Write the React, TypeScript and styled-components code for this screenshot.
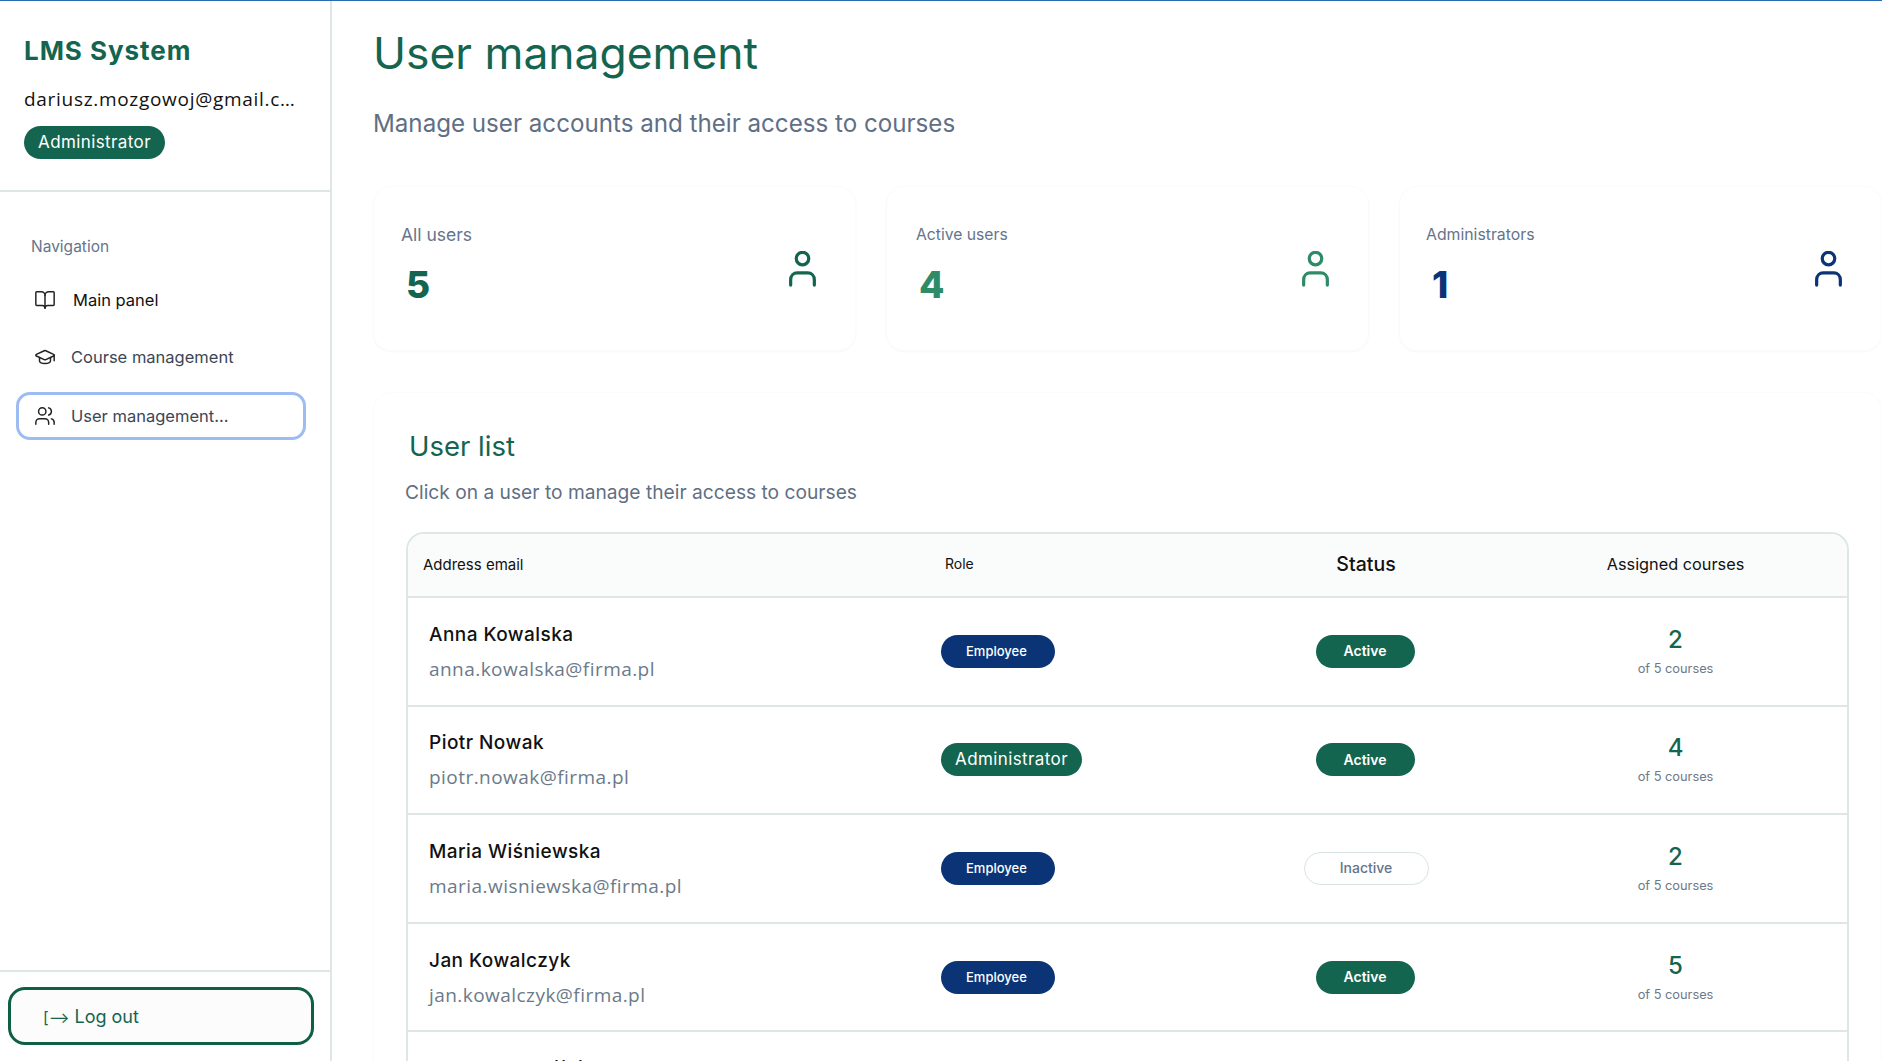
import React from "react";
import styled, { createGlobalStyle } from "styled-components";
import { BookOpen, GraduationCap, Users } from "lucide-react";

const Global = createGlobalStyle`
  html, body { margin: 0; padding: 0; height: 100%; overflow: hidden; background: #fff; }
  #root { height: 100%; }
  * { box-sizing: border-box; }
`;

const GREEN = "#14654f";
const NAVY = "#0b3477";
const GREY = "#64748b";
const LINE = "#dfe7e6";
const WIDE = `"Open Sans", "Noto Sans", sans-serif`;
const BODY = `Inter, "Noto Sans", sans-serif`;

const Shell = styled.div`
  display: flex;
  height: 1061px;
  overflow: hidden;
  border-top: 1px solid #2b6cb0;
  font-family: ${BODY};
`;
const Sidebar = styled.aside`
  width: 332px;
  flex: none;
  display: flex;
  flex-direction: column;
  border-right: 2px solid ${LINE};
`;
const Brand = styled.div`
  height: 191px;
  padding: 33px 24px 0;
  border-bottom: 2px solid ${LINE};
`;
const Logo = styled.div`
  font: 700 26px/34px ${BODY};
  letter-spacing: 0.95px;
  color: ${GREEN};
`;
const UserEmail = styled.div`
  margin-top: 18px;
  font: 400 19px/26px ${WIDE};
  letter-spacing: 0.7px;
  color: #111;
  width: 274px;
  white-space: nowrap;
  overflow: hidden;
  text-overflow: ellipsis;
`;
const RoleBadge = styled.span<{ $tone: "green" | "navy"; $small?: boolean }>`
  display: inline-flex;
  align-items: center;
  justify-content: ${(p) => (p.$small ? "flex-start" : "center")};
  height: 33px;
  border-radius: 17px;
  color: #fff;
  background: ${(p) => (p.$tone === "green" ? GREEN : NAVY)};
  font: ${(p) => (p.$small ? "500 13px" : "400 17px")}/1 ${BODY};
  letter-spacing: ${(p) => (p.$small ? "0" : "0.4px")};
  padding: ${(p) => (p.$small ? "0 0 0 25px" : "0 14px")};
  width: ${(p) => (p.$small ? "114px" : "auto")};
`;
const BrandBadge = styled(RoleBadge)`
  margin-top: 14px;
`;
const Nav = styled.nav`
  flex: 1;
  padding: 45px 24px 0 16px;
  display: flex;
  flex-direction: column;
`;
const NavTitle = styled.div`
  font: 400 15.5px/20px ${BODY};
  color: ${GREY};
  padding-left: 15px;
  margin-bottom: 20px;
`;
const NavItem = styled.div<{ $active?: boolean; $dark?: boolean; $gap: number }>`
  display: flex;
  align-items: center;
  gap: ${(p) => p.$gap}px;
  height: ${(p) => (p.$active ? "48px" : "46px")};
  margin-top: ${(p) => (p.$active ? "1px" : "0")};
  margin-bottom: 11px;
  padding-left: ${(p) => (p.$active ? "15px" : "18px")};
  font: 400 16.5px/1 ${BODY};
  color: ${(p) => (p.$dark ? "#111" : "#3b4656")};
  border-radius: 14px;
  border: ${(p) => (p.$active ? "3px solid #9dbcf2" : "0")};
  svg { flex: none; }
`;
const SideFoot = styled.div`
  height: 91px;
  border-top: 2px solid ${LINE};
  padding: 15px 16px 0 8px;
`;
const LogOut = styled.button`
  width: 100%;
  height: 58px;
  background: #fbfcfb;
  border: 3px solid #0f5f45;
  border-radius: 17px;
  color: ${GREEN};
  font: 400 18px/1 ${BODY};
  text-align: left;
  padding: 2px 0 0 32px;
`;
const LogOutArrow = styled.span`
  font-size: 15.5px;
`;
const Main = styled.main`
  flex: 1;
  min-width: 0;
  padding: 25px 0 0 41px;
`;
const Title = styled.h1`
  margin: 0;
  font: 400 44.4px/54px ${BODY};
  color: ${GREEN};
`;
const Subtitle = styled.p`
  margin: 29px 0 0;
  font: 400 24.15px/30px ${BODY};
  color: #5f6f85;
`;
const Cards = styled.div`
  display: grid;
  grid-template-columns: repeat(3, 483px);
  gap: 30px;
  margin-top: 47px;
`;
const Card = styled.div`
  height: 165px;
  border-radius: 18px;
  border: 1px solid #fbfbfb;
  box-shadow: 0 1px 2px rgba(0, 0, 0, 0.035);
  display: flex;
  justify-content: space-between;
  padding: 36px 38px 0 27px;
`;
const CardLabel = styled.div<{ $size: number; $shift: number }>`
  font: 400 ${(p) => p.$size}px/24px ${BODY};
  margin-left: ${(p) => p.$shift}px;
  color: ${GREY};
`;
const CardValue = styled.div<{ $c: string }>`
  margin-top: 15px;
  padding-left: 5px;
  font: 800 37px/46px ${BODY};
  color: ${(p) => p.$c};
`;
const CardIcon = styled.svg`
  width: 29px;
  height: 36px;
  margin-top: 28px;
`;
const Panel = styled.section`
  margin-top: 41px;
  border: 1px solid #fbfbfb;
  border-radius: 18px 18px 0 0;
  box-shadow: 0 1px 2px rgba(0, 0, 0, 0.02);
  padding: 35px 32px 0 32px;
  height: 700px;
`;
const PanelTitle = styled.h2`
  margin: 0 0 0 3px;
  font: 400 27.5px/36px ${BODY};
  color: ${GREEN};
`;
const PanelSub = styled.p`
  margin: 14px 0 0 -1px;
  font: 400 19.2px/28px ${BODY};
  color: #5f6f85;
`;
const Table = styled.div`
  margin-top: 26px;
  border: 2px solid ${LINE};
  border-bottom: 0;
  border-radius: 18px 18px 0 0;
  overflow: hidden;
`;
const Row = styled.div<{ $head?: boolean }>`
  display: grid;
  grid-template-columns: 523px 299px 272px 1fr;
  align-items: center;
  height: ${(p) => (p.$head ? "64px" : "108.6px")};
  background: ${(p) => (p.$head ? "#fafbfb" : "#fff")};
  border-bottom: 2px solid ${LINE};
  color: #111;
`;
const HeadCell = styled.div<{ $size: number; $pad?: number; $center?: boolean; $w?: number }>`
  font: ${(p) => p.$w ?? 400} ${(p) => p.$size}px/1 ${BODY};
  padding-left: ${(p) => p.$pad ?? 0}px;
  padding-bottom: ${(p) => (p.$size < 19 ? "2px" : "0")};
  text-align: ${(p) => (p.$center ? "center" : "left")};
`;
const UserCell = styled.div`
  padding-left: 21px;
`;
const UserName = styled.div`
  margin-top: 2px;
  font: 500 19px/24px ${BODY};
  letter-spacing: 0.45px;
  color: #111;
`;
const UserMail = styled.div`
  margin-top: 9px;
  font: 400 19px/26px ${WIDE};
  letter-spacing: 0.45px;
  color: #6b7a8a;
`;
const RoleCell = styled.div`
  padding-left: 10px;
`;
const StatusCell = styled.div`
  display: flex;
  justify-content: center;
`;
const Status = styled.span<{ $on: boolean }>`
  display: inline-flex;
  align-items: center;
  justify-content: center;
  height: 33px;
  width: ${(p) => (p.$on ? "99px" : "125px")};
  margin-right: ${(p) => (p.$on ? "2px" : "0")};
  border-radius: 17px;
  font: ${(p) => (p.$on ? 600 : 500)} 14px/1 ${BODY};
  color: ${(p) => (p.$on ? "#fff" : "#64748b")};
  background: ${(p) => (p.$on ? GREEN : "#fff")};
  border: ${(p) => (p.$on ? "0" : "1.5px solid #d9e2e3")};
`;
const CountCell = styled.div`
  text-align: center;
  padding-left: 2px;
`;
const Count = styled.div`
  font: 500 24px/30px ${BODY};
  color: ${GREEN};
`;
const CountSub = styled.div`
  margin-top: 5px;
  font: 400 12.8px/18px ${BODY};
  color: #6b7a8a;
`;

const PersonIcon = ({ color }: { color: string }) => (
  <CardIcon viewBox="0 0 30 38" fill="none" stroke={color} strokeWidth="3.4" strokeLinecap="round">
    <ellipse cx="15" cy="8" rx="6.6" ry="6.6" />
    <path d="M2.5 36v-5.5C2.5 26 5.5 23 9.5 23h11c4 0 7 3 7 7.5V36" />
  </CardIcon>
);

const stats = [
  { label: "All users", value: "5", color: GREEN, size: 17.5, shift: 0 },
  { label: "Active users", value: "4", color: "#2e8b68", size: 15.7, shift: 2 },
  { label: "Administrators", value: "1", color: NAVY, size: 15.8, shift: -1 },
];

const users = [
  { name: "Anna Kowalska", mail: "anna.kowalska@firma.pl", admin: false, on: true, n: 2 },
  { name: "Piotr Nowak", mail: "piotr.nowak@firma.pl", admin: true, on: true, n: 4 },
  { name: "Maria Wiśniewska", mail: "maria.wisniewska@firma.pl", admin: false, on: false, n: 2 },
  { name: "Jan Kowalczyk", mail: "jan.kowalczyk@firma.pl", admin: false, on: true, n: 5 },
  { name: "Katarzyna Wójcik", mail: "katarzyna.wojcik@firma.pl", admin: false, on: true, n: 1 },
];

export default function App() {
  return (
    <>
      <Global />
      <Shell>
        <Sidebar>
          <Brand>
            <Logo>LMS System</Logo>
            <UserEmail>dariusz.mozgowoj@gmail.com</UserEmail>
            <BrandBadge $tone="green">Administrator</BrandBadge>
          </Brand>
          <Nav>
            <NavTitle>Navigation</NavTitle>
            <NavItem $dark $gap={17}>
              <BookOpen size={22} strokeWidth={1.6} color="#222" />
              Main panel
            </NavItem>
            <NavItem $gap={15}>
              <GraduationCap size={22} strokeWidth={1.6} color="#222" />
              Course management
            </NavItem>
            <NavItem $active $gap={15}>
              <Users size={22} strokeWidth={1.6} color="#222" />
              User management...
            </NavItem>
          </Nav>
          <SideFoot>
            <LogOut><LogOutArrow>[⟶</LogOutArrow> Log out</LogOut>
          </SideFoot>
        </Sidebar>
        <Main>
          <Title>User management</Title>
          <Subtitle>Manage user accounts and their access to courses</Subtitle>
          <Cards>
            {stats.map((s) => (
              <Card key={s.label}>
                <div>
                  <CardLabel $size={s.size} $shift={s.shift}>{s.label}</CardLabel>
                  <CardValue $c={s.color}>{s.value}</CardValue>
                </div>
                <PersonIcon color={s.color} />
              </Card>
            ))}
          </Cards>
          <Panel>
            <PanelTitle>User list</PanelTitle>
            <PanelSub>Click on a user to manage their access to courses</PanelSub>
            <Table>
              <Row $head>
                <HeadCell $size={15} $pad={15}>Address email</HeadCell>
                <HeadCell $size={14} $pad={14}>Role</HeadCell>
                <HeadCell $size={19.5} $center $w={500}>Status</HeadCell>
                <HeadCell $size={16.3} $center $pad={2}>Assigned courses</HeadCell>
              </Row>
              {users.map((u) => (
                <Row key={u.mail}>
                  <UserCell>
                    <UserName>{u.name}</UserName>
                    <UserMail>{u.mail}</UserMail>
                  </UserCell>
                  <RoleCell>
                    {u.admin ? (
                      <RoleBadge $tone="green">Administrator</RoleBadge>
                    ) : (
                      <RoleBadge $tone="navy" $small>Employee</RoleBadge>
                    )}
                  </RoleCell>
                  <StatusCell>
                    <Status $on={u.on}>{u.on ? "Active" : "Inactive"}</Status>
                  </StatusCell>
                  <CountCell>
                    <Count>{u.n}</Count>
                    <CountSub>of 5 courses</CountSub>
                  </CountCell>
                </Row>
              ))}
            </Table>
          </Panel>
        </Main>
      </Shell>
    </>
  );
}
